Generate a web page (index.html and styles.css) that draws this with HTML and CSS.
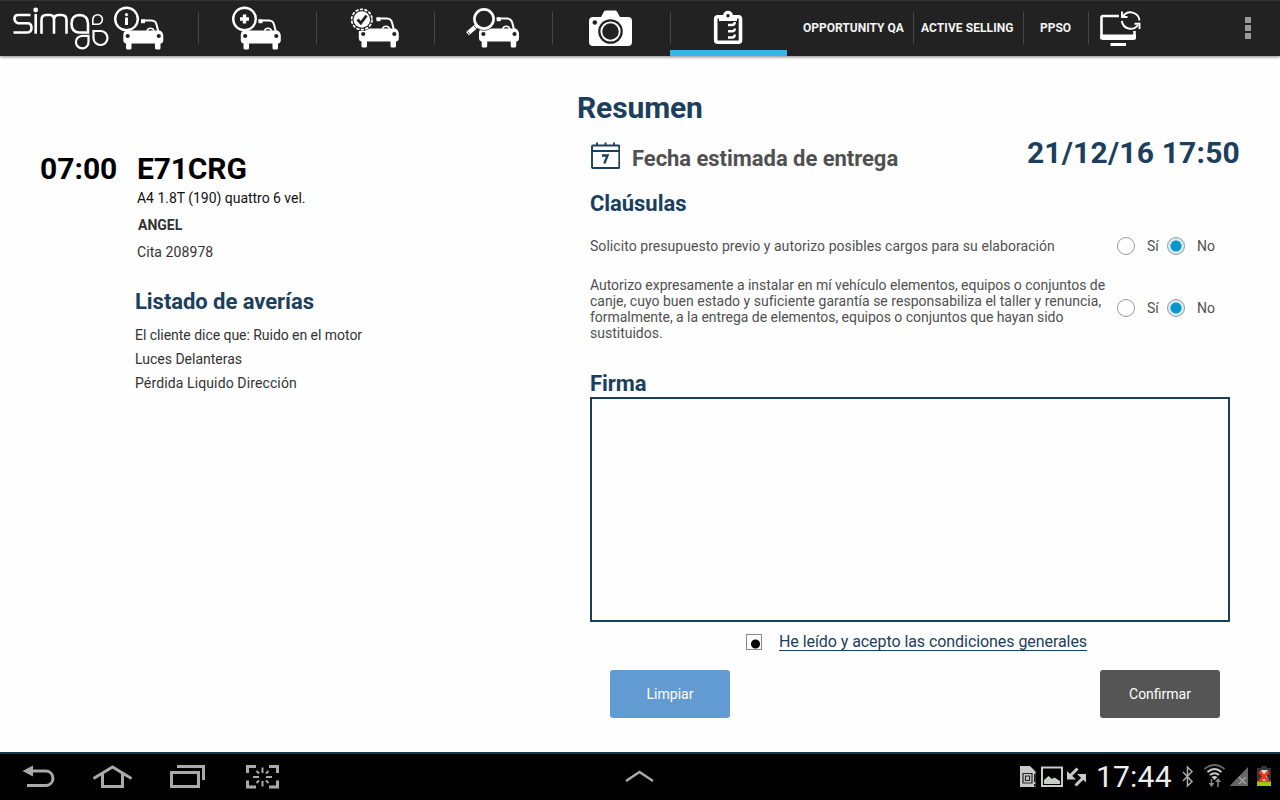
FILE: index.html
```html
<!DOCTYPE html>
<html lang="es">
<head>
<meta charset="utf-8">
<title>Simgo - Resumen</title>
<link rel="stylesheet" href="styles.css">
</head>
<body>
<svg class="defs" width="0" height="0" aria-hidden="true">
  <symbol id="car" viewBox="0 0 42 32" overflow="visible">
    <path d="M18 2.600H28.500Q32.500 2.800 33.500 6.500L35.200 13" fill="none" stroke="#fff" stroke-width="2"/>
    <path d="M18 1.400h4v3.800h-4z" fill="#fff"/>
    <path d="M24 13a3.600 3.600 0 0 1 7 0" fill="none" stroke="#fff" stroke-width="1.500"/>
    <path d="M3 12.500H37Q40.300 14 40.300 18V22Q40.300 25.300 37.500 25.500V30Q37.500 31.500 36 31.500H33.500Q32 31.500 32 30V25.500H8.500V30Q8.500 31.500 7 31.500H4.500Q3 31.500 3 30V25.500Q.3 25 .3 22V16Q.3 14 3 12.500Z" fill="#fff"/>
    <circle cx="4.700" cy="18" r="2.100" fill="#222"/><circle cx="35.800" cy="18" r="2.100" fill="#222"/>
  </symbol>
</svg>
<div class="screen">
  <header class="bar">
    <div class="brand">
      <svg width="100" height="50" viewBox="0 0 100 50" fill="none" stroke="#fff" stroke-width="2.200">
        <path d="M30.500 15H18Q14.500 15 14.500 18.500T18 23.300H27.500Q31.500 23.300 31.500 27.800T27.500 32.500H13.500" stroke-width="2.600"/>
        <path d="M35.700 14V33.800M41.500 33.800V20Q41.500 15 46 15H50Q54 15 54 20V33.800M54 20Q54 15 58.500 15H61.500Q66.500 15 66.500 20V33.800" stroke-width="2.600"/>
        <circle cx="35.700" cy="10" r="2.400" fill="#fff" stroke="none"/>
        <path d="M88 32.500H78.500Q71.500 31.500 71.500 23.500T79.500 15Q88 15.500 88 23.500Z" stroke-width="2.600"/>
        <path d="M92.800 24.300V19.500A4.800 4.800 0 1 1 97.500 24.300Z" stroke-width="1.600"/>
        <path d="M93.500 31H101A7 7 0 1 1 93.500 38.500Z"/>
        <path d="M88.500 35.800V42A6.300 6.300 0 1 1 82 35.800Z"/>
      </svg>
    </div>
    <nav class="tabs">
      <div class="tab"><svg width="118" height="56" viewBox="80 0 118 56"><use href="#car" x="123" y="18" width="42" height="32"/><circle cx="126.500" cy="19" r="11.300" fill="#222" stroke="#fff" stroke-width="2.400"/><path d="M126.500 17.500V25" stroke="#fff" stroke-width="3"/><circle cx="126.500" cy="14.600" r="1.600" fill="#fff"/></svg></div>
      <div class="tab"><svg width="118" height="56" viewBox="80 0 118 56"><use href="#car" x="122.500" y="18" width="42" height="32"/><circle cx="126.500" cy="19" r="11.300" fill="#222" stroke="#fff" stroke-width="2.400"/><path d="M126.500 14.500V23.500M122 19H131" stroke="#fff" stroke-width="3.400"/></svg></div>
      <div class="tab"><svg width="118" height="56" viewBox="80 0 118 56"><use href="#car" x="122.500" y="16" width="42" height="32"/><circle cx="125.800" cy="19.500" r="11.500" fill="#222"/><circle cx="125.800" cy="19.500" r="10.200" fill="#222" stroke="#fff" stroke-width="1.700" stroke-dasharray="3.200 1.378"/><circle cx="125.800" cy="19.500" r="8.300" fill="#fff"/><path d="M121.500 19.500L124.800 23L130.500 15.500" fill="none" stroke="#222" stroke-width="2.800"/></svg></div>
      <div class="tab"><svg width="118" height="56" viewBox="80 0 118 56"><use href="#car" x="124.700" y="16" width="42" height="32"/><circle cx="130" cy="19" r="11.500" fill="#222"/><circle cx="130" cy="19" r="9.600" fill="#222" stroke="#fff" stroke-width="2.600"/><path d="M123 25.500L113.500 33.700" stroke="#fff" stroke-width="4.400"/><path d="M119.800 25.500L122.800 29M113.600 31.500L116 34.300" stroke="#222" stroke-width=".8"/></svg></div>
      <div class="tab"><svg width="118" height="56" viewBox="552 0 118 56"><path d="M593 17H601L604 11.500Q604.500 10.500 606 10.500H615Q616.500 10.500 617 11.500L620 17H628Q632 17 632 21V42Q632 46 628 46H593Q589 46 589 42V21Q589 17 593 17Z" fill="#fff"/><circle cx="610.500" cy="31.500" r="12.300" fill="#222"/><circle cx="610.500" cy="31.500" r="9.200" fill="none" stroke="#fff" stroke-width="1.800"/><circle cx="594.800" cy="22.500" r="2.300" fill="#222"/></svg></div>
      <div class="tab active"><svg width="117" height="56" viewBox="670 0 117 56"><rect x="715.700" y="16.700" width="24.800" height="25.600" rx="2" fill="none" stroke="#fff" stroke-width="3.600"/><path d="M719 15V21H737V15Z" fill="#fff"/><circle cx="728" cy="15.800" r="5" fill="#fff"/><circle cx="728" cy="15.800" r="1.700" fill="#222"/><path d="M728 25H732Q734.800 25 734.800 22M728 31.300H732Q734.800 31.300 734.800 28.500M728 37.500H732Q734.800 37.500 734.800 34.500" fill="none" stroke="#fff" stroke-width="2.400"/></svg></div>
    </nav>
    <div class="link opp">OPPORTUNITY QA</div>
    <div class="link act">ACTIVE SELLING</div>
    <div class="link pps">PPSO</div>
    <svg class="sync" width="46" height="40" viewBox="1098 9 46 40" fill="none" stroke="#fff"><path d="M1119 16H1103Q1101.500 16 1101.500 17.500V38H1134.500V31" stroke-width="2.600"/><path d="M1100.300 34.500H1136V37Q1136 40 1133 40H1103.300Q1100.300 40 1100.300 37Z" fill="#fff" stroke="none"/><path d="M1110.500 44.500H1126" stroke-width="3"/><path d="M1123 16.500A9 9 0 0 1 1139.500 20.500M1138 25A9 9 0 0 1 1121.800 21" stroke-width="1.900"/><path d="M1122 11.500V17H1127.500M1139.500 29V23.800H1134.500" stroke-width="1.900"/></svg>
    <div class="more"><i></i><i></i><i></i></div>
  </header>

  <main class="content">
    <section class="visit">
      <div class="time">07:00</div>
      <div class="details">
        <h1 class="plate">E71CRG</h1>
        <p class="model">A4 1.8T (190) quattro 6 vel.</p>
        <p class="client">ANGEL</p>
        <p class="cita">Cita 208978</p>
        <h2 class="heading faults-title">Listado de averías</h2>
        <ul class="faults"><li class="f1">El cliente dice que: Ruido en el motor</li><li>Luces Delanteras</li><li class="f3">Pérdida Liquido Dirección</li></ul>
      </div>
    </section>

    <section class="summary">
      <h1 class="title">Resumen</h1>
      <div class="inner">
        <div class="delivery">
          <svg width="30" height="28" viewBox="590 142 30 28" fill="none" stroke="#1b3f5c" stroke-width="1.900"><rect x="592" y="145.500" width="27.300" height="22.500" rx="1"/><path d="M592 151H619.500M597 142.500V146M605.500 142.500V146M614 142.500V146"/><path d="M602 155.500H607.600L604.300 163.500" stroke-width="2.300"/></svg>
          <span class="label">Fecha estimada de entrega</span>
          <span class="date">21/12/16 17:50</span>
        </div>
        <h2 class="heading clauses-title">Claúsulas</h2>
        <div class="clause one">
          <p>Solicito presupuesto previo y autorizo posibles cargos para su elaboración</p>
          <div class="choice"><i class="radio"></i><span class="si">Sí</span><i class="radio on"></i><span>No</span></div>
        </div>
        <div class="clause two">
          <p><span class="l1">Autorizo expresamente a instalar en mí vehículo elementos, equipos o conjuntos de</span><br><span class="l2">canje, cuyo buen estado y suficiente garantía se responsabiliza el taller y renuncia,</span><br><span class="l3">formalmente, a la entrega de elementos, equipos o conjuntos que hayan sido</span><br>sustituidos.</p>
          <div class="choice"><i class="radio"></i><span class="si">Sí</span><i class="radio on"></i><span>No</span></div>
        </div>
        <h2 class="heading sign-title">Firma</h2>
        <div class="signature"></div>
        <div class="accept"><i class="check"></i><a>He leído y acepto las condiciones generales</a></div>
        <div class="actions"><div class="btn blue">Limpiar</div><div class="btn grey">Confirmar</div></div>
      </div>
    </section>
  </main>

  <footer class="system">
    <svg class="keys" width="290" height="46" viewBox="0 754 290 46" fill="none" stroke="#aaa" stroke-width="3">
      <path d="M31 771H46.500A7.300 7.300 0 0 1 46.500 785.500H27"/><path d="M22.500 771L33 765.500V776.500Z" fill="#aaa" stroke="none"/>
      <path d="M93.500 778.500L112.500 767L131.500 778.500M102.500 774V786.500H122.500V774"/>
      <rect x="171.500" y="772.500" width="27" height="14"/><path d="M177 766.500H203.500V780"/>
      <path d="M247.500 773V766.500H256M269 766.500H277.500V773M277.500 780.500V787H269M256 787H247.500V780.500"/>
      <path d="M262.500 767.500V773M262.500 781V786.500M253 777H259M266 777H272M256.500 771L259 773.500M268.500 771L266 773.500M256.500 783L259 780.500M268.500 783L266 780.500" stroke-width="2"/>
    </svg>
    <svg class="up" width="32" height="16" viewBox="624 769 32 16"><path d="M626 781L639.500 772L653 781" fill="none" stroke="#aaa" stroke-width="2.400"/></svg>
    <svg class="notes" width="70" height="26" viewBox="1018 764 70 26">
      <path d="M1020 766H1030L1035.500 771.500V787H1020Z" fill="#c8ccc8"/><path d="M1023 773.500h9v9.500h-9zM1025.500 776h4v4.500h-4z" fill="none" stroke="#222" stroke-width="1.200"/><path d="M1034.800 774v8M1034.800 784v2.500" stroke="#111" stroke-width="1.500"/>
      <path d="M1042 767.500H1062V786H1042Z" fill="none" stroke="#c8ccc8" stroke-width="2"/><path d="M1044 784V780L1048.500 776L1052 779L1054.500 777.500L1060 781V784Z" fill="#c8ccc8"/>
      <path d="M1077.500 768.500L1070 776M1075.500 785.500L1084 777" stroke="#c8ccc8" stroke-width="3"/><path d="M1067 771V779.500H1076ZM1077 774H1086V782.500Z" fill="#c8ccc8"/>
    </svg>
    <span class="clock">17:44</span>
    <svg class="status" width="94" height="28" viewBox="1180 762 94 28">
      <path d="M1183 772L1192 781.500L1187.500 786V767L1192 771.500L1183 781" fill="none" stroke="#aaa" stroke-width="1.500"/>
      <g fill="none" stroke-width="2"><path d="M1204.500 769Q1214.500 761 1224.500 769" stroke="#666"/><path d="M1207.500 772Q1214.500 766 1221.500 772M1210 775Q1214.500 771.500 1219 775" stroke="#ccc"/></g><path d="M1211.500 777Q1214.500 775 1217.500 777L1214.500 780Z" fill="#ccc"/>
      <path d="M1211.500 779V786M1218 787V780" stroke="#888" stroke-width="1.500"/><path d="M1208.500 783H1214.500L1211.500 787ZM1215 782H1221L1218 778Z" fill="#888"/>
      <path d="M1229.500 786H1248V767Z" fill="#666"/><path d="M1239 777L1246 784M1246 777L1239 784" stroke="#aaa" stroke-width="1.200"/>
      <path d="M1261 766H1267V768H1271V782H1257V768H1261Z" fill="#353535"/><path d="M1257 781.500H1271V786H1257Z" fill="#9dcc00"/><path d="M1261 770H1268L1266 774L1269 781H1260L1263 775Z" fill="#ddd"/><path d="M1259.500 771.500L1268.500 781.500M1268.500 771.500L1259.500 781.500" stroke="#f03818" stroke-width="3"/>
    </svg>
  </footer>
</div>
</body>
</html>
```

FILE: styles.css
```css
* { box-sizing: border-box; }
body { margin: 0; font-family: Roboto, sans-serif; background: #fefefe; }
h1, h2, p, ul { margin: 0; padding: 0; font-weight: 400; list-style: none; }
svg { display: block; flex: none; }
.defs { position: absolute; }
.screen { width: 1280px; height: 800px; display: flex; flex-direction: column; overflow: hidden; }

.bar { height: 56px; flex: none; display: flex; background: #222; border-top: 1px solid #333; box-shadow: 0 1px 3px rgba(0,0,0,.5); }
.bar svg { margin-top: -1px; }
.brand { width: 80px; flex: none; }
.brand svg { overflow: visible; }
.tabs { display: flex; }
.tab, .link { position: relative; flex: none; width: 118px; height: 55px; }
.tab:not(.active)::after, .link::after { content: ""; position: absolute; right: -1px; top: 11px; width: 1px; height: 32px; background: #484848; }
.tab.active { width: 117px; }
.tab.active::after { content: ""; position: absolute; left: 0; right: 0; bottom: 0; height: 6px; background: #33b5e5; }
.link { font-size: 12px; font-weight: 700; line-height: 54px; color: #f4f4f4; white-space: nowrap; }
.opp { width: 126px; padding-left: 16px; }
.act { width: 110px; padding-left: 8px; letter-spacing: .08px; }
.pps { width: 65px; padding-left: 17px; }
.bar .sync { margin: 8px 0 0 10px; }
.more { margin: 16px 29px 0 auto; display: flex; flex-direction: column; gap: 2px; }
.more i { width: 6px; height: 6px; background: #999; }

.content { flex: 1; display: flex; }
.visit { width: 577px; display: flex; padding: 94px 0 0 40px; }
.time { width: 97px; font-size: 30px; font-weight: 700; line-height: 37px; }
.plate { font-size: 30px; font-weight: 700; line-height: 37px; letter-spacing: -.15px; }
.model, .client, .cita { font-size: 14px; line-height: 27px; color: #333; white-space: nowrap; }
.model { color: #111; margin-top: -2px; letter-spacing: -.03px; }
.client { font-weight: 700; padding-left: 1px; }
.cita { letter-spacing: .08px; }
.heading { font-size: 22px; font-weight: 700; line-height: 28px; color: #1b3f5c; letter-spacing: -.05px; white-space: nowrap; }
.faults-title { margin: 22px 0 0 -2px; }
.faults { margin: 7px 0 0 -2px; font-size: 14px; line-height: 24px; color: #333; white-space: nowrap; }
.f1 { letter-spacing: -.04px; }
.f3 { letter-spacing: .12px; }

.summary { flex: 1; padding-top: 34px; }
.title { font-size: 30px; font-weight: 700; line-height: 36px; letter-spacing: -.12px; color: #1b3f5c; }
.inner { width: 653px; padding-left: 13px; }
.delivery { display: flex; height: 53px; padding-top: 16px; }
.label { margin-left: 12px; font-size: 22px; font-weight: 700; line-height: 33px; letter-spacing: -.04px; color: #505050; }
.date { margin: -8px -10px 0 auto; font-size: 30px; font-weight: 700; line-height: 38px; letter-spacing: .2px; color: #1b3f5c; white-space: nowrap; }
.clauses-title { margin-top: 11px; }
.clause { display: flex; justify-content: space-between; align-items: center; font-size: 14px; line-height: 16px; color: #505050; white-space: nowrap; }
.one { height: 36px; margin-top: 10px; }
.one p { letter-spacing: .056px; }
.two { height: 64px; margin-top: 13px; }
.l1 { letter-spacing: -.035px; }
.l2 { letter-spacing: .02px; }
.l3 { letter-spacing: -.04px; }
.choice { display: flex; align-items: center; width: 113px; flex: none; }
.two .choice { padding-bottom: 2px; }
.radio { width: 18px; height: 18px; border: 1px solid #999; border-radius: 50%; margin-right: 12px; flex: none; }
.radio.on { background: radial-gradient(circle, #0a96c8 0 5px, #d3edf5 6px); }
.si { width: 20px; }
.sign-title { margin-top: 29px; margin-bottom: -1px; }
.signature { width: 640px; height: 225px; border: 2px solid #1b3f55; }
.accept { display: flex; align-items: center; height: 40px; padding-left: 156px; }
.check { width: 16px; height: 16px; border: 1px solid #888; margin-right: 17px; background: radial-gradient(circle at 8.5px 9px, #000 0 4px, transparent 5px); }
.accept a { font-size: 16px; line-height: 20px; letter-spacing: -.065px; color: #1b3f5c; text-decoration: underline; text-underline-offset: 3px; white-space: nowrap; }
.actions { display: flex; justify-content: space-between; padding: 8px 10px 0 20px; }
.btn { width: 120px; height: 48px; border-radius: 3px; font-size: 14px; line-height: 48px; text-align: center; color: #fff; }
.blue { background: #629bd2; }
.grey { background: #555; }

.system { height: 48px; flex: none; display: flex; background: #000; border-top: 2px solid #12394a; }
.up { margin: 15px 0 0 334px; }
.notes { margin: 10px 0 0 362px; }
.clock { width: 84px; margin-left: 8px; font-size: 30px; line-height: 46px; letter-spacing: .2px; color: #eee; white-space: nowrap; }
.status { margin: 8px 0 0; }
```
